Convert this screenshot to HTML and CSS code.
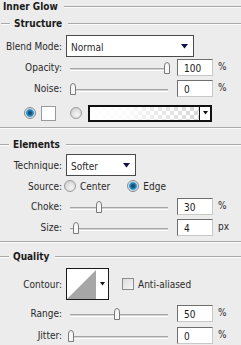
FILE: index.html
```html
<!DOCTYPE html>
<html>
<head>
<meta charset="utf-8">
<link rel="stylesheet" href="styles.css">
</head>
<body>
<div class="panel">
  <div class="hdr h-inner"><span class="ht">Inner Glow</span><span class="rule"></span></div>
  <div class="hdr h-struct"><span class="lead"></span><span class="ht">Structure</span><span class="rule"></span></div>

  <div class="row r-blend">
    <span class="lbl">Blend Mode:</span>
    <div class="select sel-blend"><span class="sv">Normal</span><svg class="arr" width="7" height="5" viewBox="0 0 7 5"><path d="M0 0H7L3.5 4.5Z"/></svg></div>
  </div>

  <div class="row r-opacity">
    <span class="lbl">Opacity:</span>
    <div class="slider"><span class="track"></span><svg class="thumb" style="left:93px" width="8" height="12" viewBox="0 0 8 12"><path d="M1.5 11.5V4Q1.5 0.5 4 0.5Q6.5 0.5 6.5 4V11.5Z"/></svg></div>
    <span class="num">100</span><span class="unit">%</span>
  </div>

  <div class="row r-noise">
    <span class="lbl">Noise:</span>
    <div class="slider"><span class="track"></span><svg class="thumb" style="left:-1px" width="8" height="12" viewBox="0 0 8 12"><path d="M1.5 11.5V4Q1.5 0.5 4 0.5Q6.5 0.5 6.5 4V11.5Z"/></svg></div>
    <span class="num">0</span><span class="unit">%</span>
  </div>

  <div class="row r-color">
    <span class="radio on r1"></span>
    <span class="swatch"></span>
    <span class="radio r2"></span>
    <div class="grad"><span class="gfill"></span><span class="garr"><svg width="5" height="4" viewBox="0 0 5 4"><path d="M0 0H5L2.5 3.5Z"/></svg></span></div>
  </div>

  <div class="sep s1"></div>

  <div class="hdr h-elem"><span class="lead"></span><span class="ht">Elements</span><span class="rule"></span></div>

  <div class="row r-tech">
    <span class="lbl">Technique:</span>
    <div class="select sel-tech"><span class="sv">Softer</span><svg class="arr" width="7" height="5" viewBox="0 0 7 5"><path d="M0 0H7L3.5 4.5Z"/></svg></div>
  </div>

  <div class="row r-source">
    <span class="lbl">Source:</span>
    <span class="radio src1"></span><span class="rt">Center</span>
    <span class="radio on src2"></span><span class="rt">Edge</span>
  </div>

  <div class="row r-choke">
    <span class="lbl">Choke:</span>
    <div class="slider"><span class="track"></span><svg class="thumb" style="left:25px" width="8" height="12" viewBox="0 0 8 12"><path d="M1.5 11.5V4Q1.5 0.5 4 0.5Q6.5 0.5 6.5 4V11.5Z"/></svg></div>
    <span class="num">30</span><span class="unit">%</span>
  </div>

  <div class="row r-size">
    <span class="lbl">Size:</span>
    <div class="slider"><span class="track"></span><svg class="thumb" style="left:2px" width="8" height="12" viewBox="0 0 8 12"><path d="M1.5 11.5V4Q1.5 0.5 4 0.5Q6.5 0.5 6.5 4V11.5Z"/></svg></div>
    <span class="num">4</span><span class="unit px">px</span>
  </div>

  <div class="sep s2"></div>

  <div class="hdr h-qual"><span class="lead"></span><span class="ht">Quality</span><span class="rule"></span></div>

  <div class="row r-contour">
    <span class="lbl">Contour:</span>
    <div class="contour"><svg class="cshape" width="29" height="30" viewBox="0 0 29 30"><path d="M0 30L29 1V30Z" fill="#a6a6a6"/></svg><span class="carr"><svg width="5" height="4" viewBox="0 0 5 4"><path d="M0 0H5L2.5 3.5Z"/></svg></span></div>
    <span class="check"></span><span class="ct">Anti-aliased</span>
  </div>

  <div class="row r-range">
    <span class="lbl">Range:</span>
    <div class="slider"><span class="track"></span><svg class="thumb" style="left:43px" width="8" height="12" viewBox="0 0 8 12"><path d="M1.5 11.5V4Q1.5 0.5 4 0.5Q6.5 0.5 6.5 4V11.5Z"/></svg></div>
    <span class="num">50</span><span class="unit">%</span>
  </div>

  <div class="row r-jitter">
    <span class="lbl">Jitter:</span>
    <div class="slider"><span class="track"></span><svg class="thumb" style="left:-3px" width="8" height="12" viewBox="0 0 8 12"><path d="M1.5 11.5V4Q1.5 0.5 4 0.5Q6.5 0.5 6.5 4V11.5Z"/></svg></div>
    <span class="num">0</span><span class="unit">%</span>
  </div>
</div>
</body>
</html>
```
FILE: styles.css
```css
html, body {
  margin: 0;
  padding: 0;
  background: #ececec;
}
body {
  width: 241px;
  height: 345px;
  overflow: hidden;
  font-family: "DejaVu Sans Condensed", "DejaVu Sans", sans-serif;
  font-stretch: condensed;
  font-size: 10px;
  color: #2a2a2a;
}
.panel {
  display: flex;
  flex-direction: column;
}
.hdr {
  display: flex;
  align-items: center;
  height: 13px;
}
.ht {
  font-weight: bold;
  color: #1a1a1a;
  flex: none;
}
.rule, .lead {
  height: 0;
  border-top: 1px solid #a9a9a9;
  border-bottom: 1px solid #fbfbfb;
}
.rule {
  flex: 1;
  margin-left: 6px;
}
.lead {
  width: 9px;
  flex: none;
  margin-right: 4px;
}
.h-inner { margin-top: 0; padding-left: 3px; }
.h-struct { margin-top: 4px; padding-left: 1px; }
.h-elem { margin-top: 9px; }
.h-qual { margin-top: 7px; }

.sep {
  height: 0;
  border-top: 1px solid #a9a9a9;
  border-bottom: 1px solid #fbfbfb;
}
.s1 { margin-top: 6px; }
.s2 { margin-top: 5px; }

.row {
  display: flex;
  align-items: center;
  flex: none;
}
.lbl {
  width: 62px;
  flex: none;
  text-align: right;
  color: #2a2a2a;
}

.select {
  margin-left: 4px;
  background: #fff;
  border: 1px solid #4a4a4a;
  box-sizing: border-box;
  display: flex;
  align-items: center;
  position: relative;
}
.sv { padding-left: 4px; flex: 1; padding-top: 2px; }
.arr { fill: #10104a; margin-right: 5px; }
.sel-blend { width: 128px; height: 22px; }
.sel-tech { width: 70px; height: 22px; }
.r-blend { margin-top: 5px; height: 22px; }

.slider {
  position: relative;
  width: 98px;
  height: 17px;
  margin-left: 8px;
  flex: none;
}
.track {
  position: absolute;
  left: 0;
  right: 0;
  top: 9px;
  height: 1px;
  border-top: 1px solid #a4a4a4;
  border-bottom: 1px solid #fff;
  background: #d4d4d4;
}
.thumb {
  position: absolute;
  top: 3px;
  fill: #f6f6f6;
  stroke: #7a7a7a;
  stroke-width: 1;
}
.num {
  margin-left: 9px;
  width: 36px;
  height: 17px;
  box-sizing: border-box;
  background: #fff;
  border: 1px solid #6e6e6e;
  border-right-color: #c8c8c8;
  border-bottom-color: #c8c8c8;
  padding-left: 6px;
  padding-top: 2px;
  line-height: 13px;
  color: #1a1a1a;
  flex: none;
}
.unit {
  margin-left: 5px;
  align-self: flex-start;
  margin-top: 2px;
}
.r-opacity { margin-top: 2px; height: 17px; }
.r-noise { margin-top: 4px; height: 17px; }
.r-choke { margin-top: 6px; height: 17px; }
.r-size { margin-top: 4px; height: 17px; }
.r-range { margin-top: 5px; height: 17px; }
.r-jitter { margin-top: 5px; height: 17px; }

.radio {
  width: 12px;
  height: 12px;
  box-sizing: border-box;
  border-radius: 50%;
  border: 1px solid #9b9b9b;
  background: radial-gradient(circle at 60% 65%, #f4f4f4 0, #dedede 55%, #c6c6c6 100%);
  flex: none;
  position: relative;
}
.radio.on {
  background: radial-gradient(circle, #0d3f66 0, #1b6797 30%, #46a6d8 52%, #bcd6e4 60%, #ececec 72%, #dcdcdc 100%);
  border-color: #8a8a8a;
}
.r-color { margin-top: 8px; height: 16px; }
.r1 { margin-left: 24px; }
.swatch {
  margin-left: 5px;
  width: 15px;
  height: 15px;
  box-sizing: border-box;
  border: 1px solid #9a9a9a;
  background: #fff;
  flex: none;
}
.r2 { margin-left: 14px; }
.grad {
  margin-left: 6px;
  width: 124px;
  height: 17px;
  box-sizing: border-box;
  border: 2px solid #111;
  display: flex;
  flex: none;
}
.gfill {
  flex: 1;
  background:
    linear-gradient(to right, #fff 0%, rgba(255,255,255,0.85) 35%, rgba(255,255,255,0) 100%),
    repeating-conic-gradient(#d6d6d6 0 25%, #ffffff 0 50%) 0 0 / 8px 8px;
}
.garr {
  width: 10px;
  border-left: 1px solid #111;
  background: #fff;
  display: flex;
  align-items: center;
  justify-content: center;
  fill: #111;
}

.r-tech { margin-top: 3px; height: 22px; }
.r-source { margin-top: 4px; height: 12px; }
.src1 { margin-left: 2px; }
.rt { margin-left: 4px; }
.src2 { margin-left: 17px; }

.r-contour { margin-top: 5px; height: 32px; }
.contour {
  margin-left: 4px;
  width: 43px;
  height: 32px;
  box-sizing: border-box;
  border: 1px solid #1a1a1a;
  background: #fff;
  display: flex;
  flex: none;
}
.cshape { display: block; flex: none; }
.carr {
  flex: 1;
  display: flex;
  align-items: center;
  justify-content: center;
  fill: #111;
}
.check {
  margin-left: 13px;
  width: 12px;
  height: 12px;
  box-sizing: border-box;
  border: 1px solid #8c8c8c;
  background: linear-gradient(135deg, #dcdcdc, #f7f7f7);
  flex: none;
}
.ct { margin-left: 4px; }
```
